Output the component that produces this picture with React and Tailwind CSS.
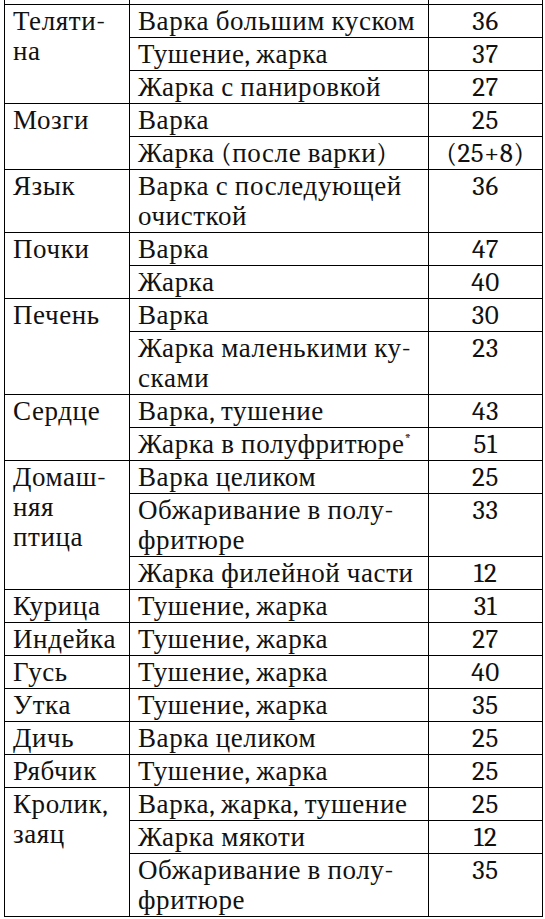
import React from 'react';

const groups = [
  { name: ['Теляти-', 'на'], rows: [
    { text: ['Варка большим куском'], n: '36' },
    { text: ['Тушение, жарка'], n: '37' },
    { text: ['Жарка с панировкой'], n: '27' },
  ] },
  { name: ['Мозги'], rows: [
    { text: ['Варка'], n: '25' },
    { text: ['Жарка (после варки)'], n: '(25+8)' },
  ] },
  { name: ['Язык'], rows: [
    { text: ['Варка с последующей', 'очисткой'], n: '36' },
  ] },
  { name: ['Почки'], rows: [
    { text: ['Варка'], n: '47' },
    { text: ['Жарка'], n: '40' },
  ] },
  { name: ['Печень'], rows: [
    { text: ['Варка'], n: '30' },
    { text: ['Жарка маленькими ку-', 'сками'], n: '23' },
  ] },
  { name: ['Сердце'], rows: [
    { text: ['Варка, тушение'], n: '43' },
    { text: ['Жарка в полуфритюре'], star: true, n: '51' },
  ] },
  { name: ['Домаш-', 'няя', 'птица'], rows: [
    { text: ['Варка целиком'], n: '25' },
    { text: ['Обжаривание в полу-', 'фритюре'], n: '33' },
    { text: ['Жарка филейной части'], n: '12' },
  ] },
  { name: ['Курица'], rows: [{ text: ['Тушение, жарка'], n: '31' }] },
  { name: ['Индейка'], rows: [{ text: ['Тушение, жарка'], n: '27' }] },
  { name: ['Гусь'], rows: [{ text: ['Тушение, жарка'], n: '40' }] },
  { name: ['Утка'], rows: [{ text: ['Тушение, жарка'], n: '35' }] },
  { name: ['Дичь'], rows: [{ text: ['Варка целиком'], n: '25' }] },
  { name: ['Рябчик'], rows: [{ text: ['Тушение, жарка'], n: '25' }] },
  { name: ['Кролик,', 'заяц'], rows: [
    { text: ['Варка, жарка, тушение'], n: '25' },
    { text: ['Жарка мякоти'], n: '12' },
    { text: ['Обжаривание в полу-', 'фритюре'], n: '35' },
  ] },
];

const Lines = ({ items }) =>
  items.map((t, i) => (
    <React.Fragment key={i}>
      {i > 0 && <br />}
      {t}
    </React.Fragment>
  ));

const cell =
  'border border-black align-top pt-[2px] pb-0 leading-[30px] text-[27px] tracking-[0.6px] text-[#111] font-serif';

export default function App() {
  return (
    <div className="bg-white w-[545px] h-[919px] overflow-hidden font-serif">
      <table className="ml-[4px] w-[538px] border-collapse table-fixed">
        <colgroup>
          <col className="w-[125px]" />
          <col className="w-[299px]" />
          <col className="w-[114px]" />
        </colgroup>
        <tbody>
          <tr className="h-[4px]">
            <td className="border-x border-black p-0" />
            <td className="border-x border-black p-0" />
            <td className="border-x border-black p-0" />
          </tr>
          {groups.map((g, gi) =>
            g.rows.map((r, ri) => (
              <tr key={gi + '-' + ri}>
                {ri === 0 && (
                  <td rowSpan={g.rows.length} className={cell + ' pl-[8px]'}>
                    <Lines items={g.name} />
                  </td>
                )}
                <td className={cell + ' pl-[8px] whitespace-nowrap'}>
                  <Lines items={r.text} />
                  {r.star && <span className="relative -top-[9px] text-[15px] leading-none">*</span>}
                </td>
                <td className={cell + ' text-center'}>{r.n}</td>
              </tr>
            ))
          )}
        </tbody>
      </table>
    </div>
  );
}
